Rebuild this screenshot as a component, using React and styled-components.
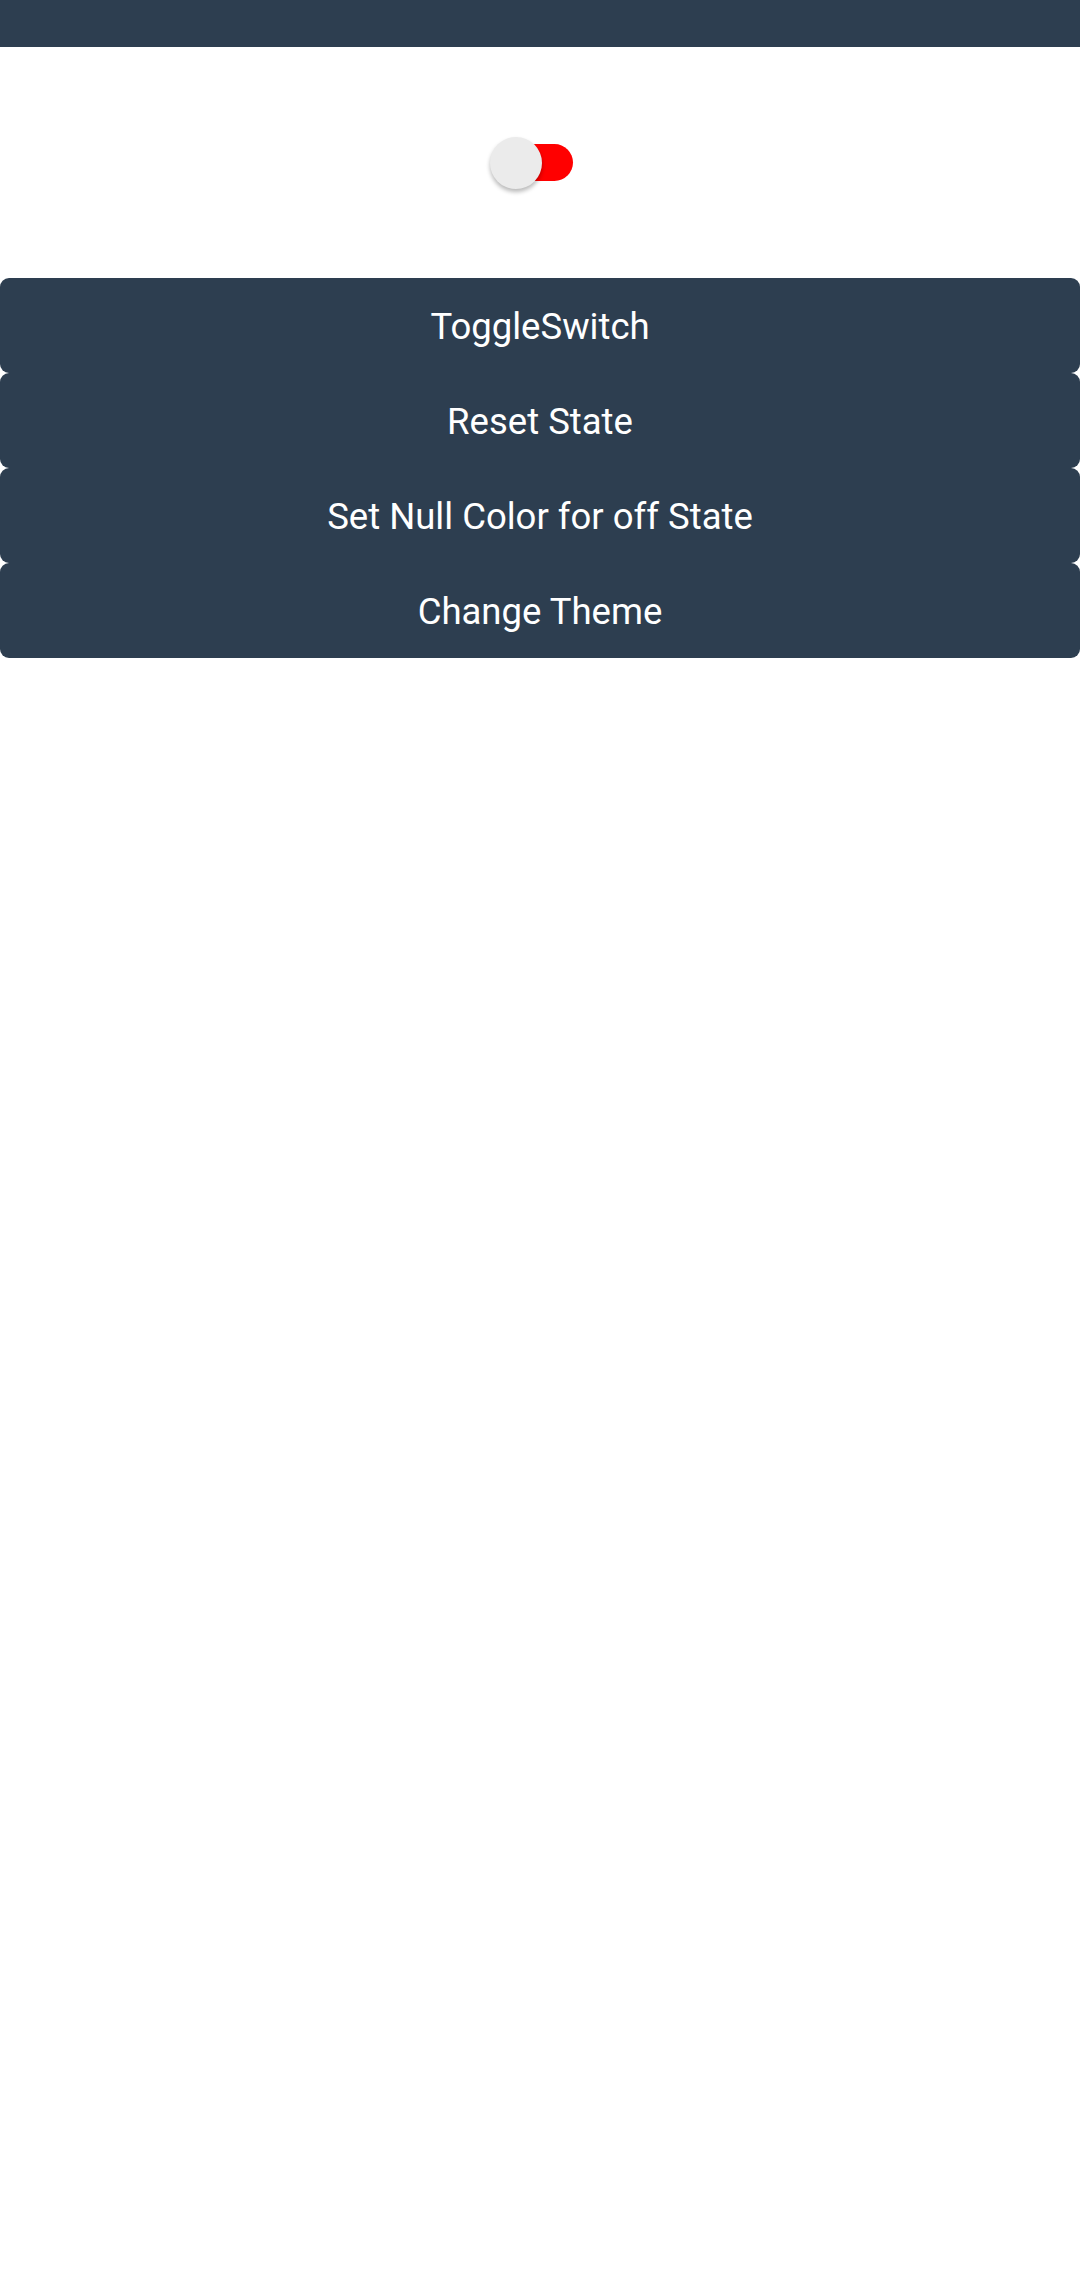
import React, { useState } from "react";
import styled, { createGlobalStyle } from "styled-components";

const GlobalStyle = createGlobalStyle`
  html, body {
    margin: 0;
    padding: 0;
    background: #ffffff;
    font-family: Roboto, "Liberation Sans", sans-serif;
  }
`;

const Header = styled.div`
  height: 47px;
  background-color: #2d3e50;
`;

const SwitchArea = styled.div`
  height: 231px;
  display: flex;
  align-items: center;
  justify-content: center;
`;

const Switch = styled.div`
  position: relative;
  width: 83px;
  height: 52px;
  margin-right: 17px;
  display: flex;
  align-items: center;
  justify-content: flex-end;
  cursor: pointer;
`;

const Track = styled.div`
  width: 74px;
  height: 37px;
  border-radius: 19px;
  background-color: ${(props) => (props.on ? "#4caf50" : "#ff0000")};
`;

const Knob = styled.div`
  position: absolute;
  top: 0;
  left: ${(props) => (props.on ? "31px" : "0")};
  width: 52px;
  height: 52px;
  border-radius: 50%;
  background-color: #ebebeb;
  box-shadow: 0 3px 4px rgba(0, 0, 0, 0.28);
`;

const ButtonList = styled.div`
  display: flex;
  flex-direction: column;
`;

const Button = styled.button`
  height: 95px;
  width: 100%;
  border: none;
  border-radius: 9px;
  background-color: #2d3e50;
  color: #ffffff;
  font-family: Roboto, "Liberation Sans", sans-serif;
  font-size: 36.5px;
  padding: 2px 0 0;
  cursor: pointer;
`;

const App = () => {
  const [on, setOn] = useState(false);

  return (
    <>
      <GlobalStyle />
      <Header />
      <SwitchArea>
        <Switch onClick={() => setOn(!on)}>
          <Track on={on ? 1 : 0} />
          <Knob on={on ? 1 : 0} />
        </Switch>
      </SwitchArea>
      <ButtonList>
        <Button onClick={() => setOn(!on)}>ToggleSwitch</Button>
        <Button onClick={() => setOn(false)}>Reset State</Button>
        <Button>Set Null Color for off State</Button>
        <Button>Change Theme</Button>
      </ButtonList>
    </>
  );
};

export default App;
